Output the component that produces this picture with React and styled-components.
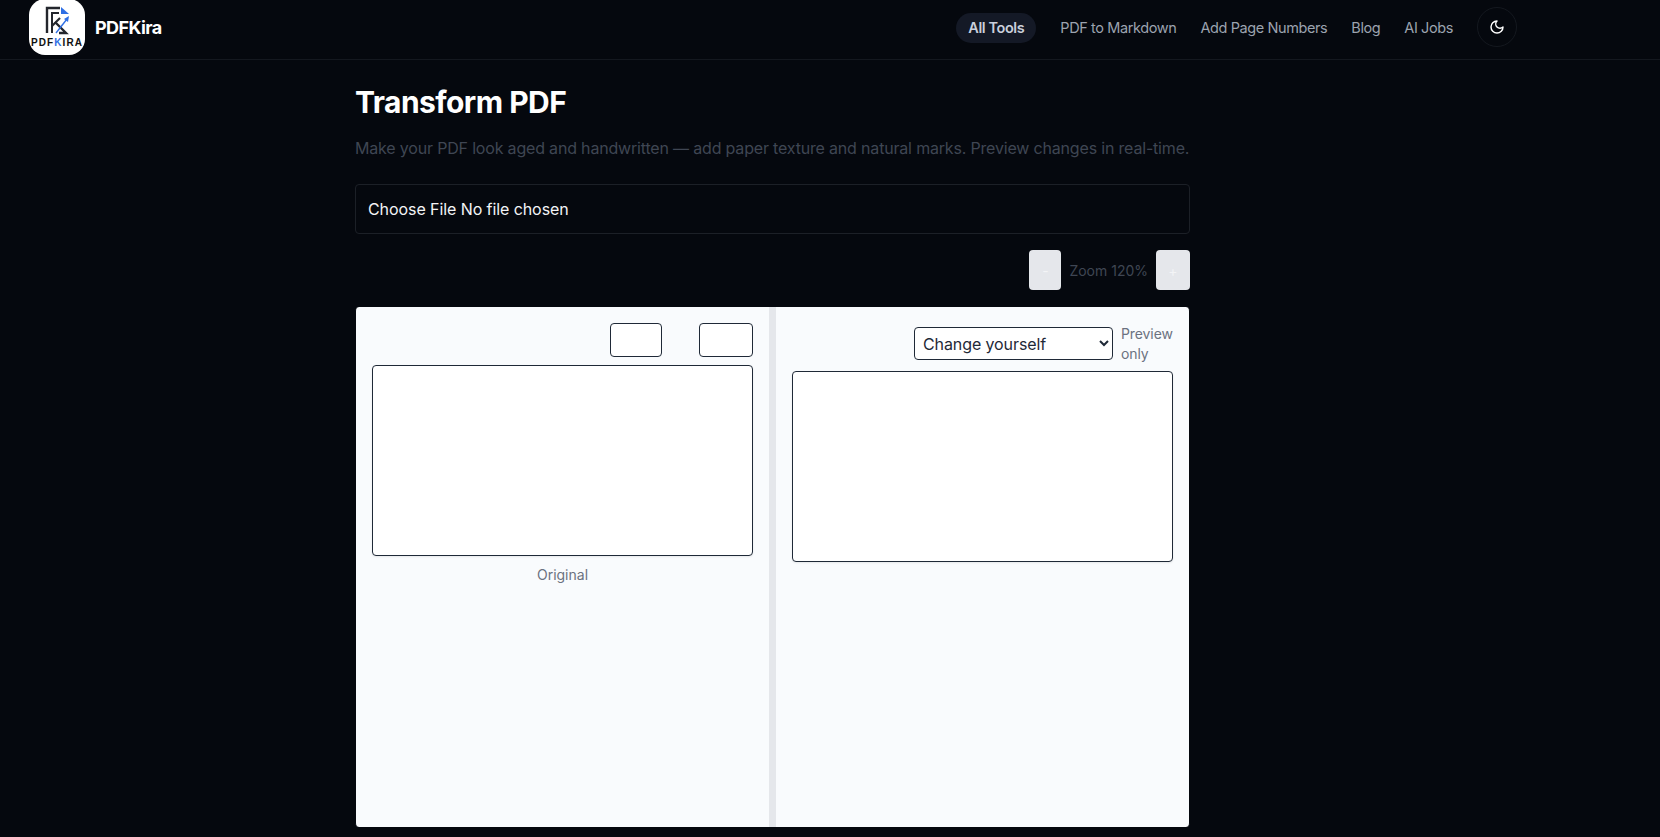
import React from 'react'
import styled, { createGlobalStyle } from 'styled-components'

const FONT = `Inter, "Liberation Sans", sans-serif`

const GlobalStyle = createGlobalStyle`
  html, body {
    margin: 0;
    padding: 0;
    height: 837px;
    overflow: hidden;
    background: #05080e;
    font-family: ${FONT};
  }
  * {
    box-sizing: border-box;
  }
`

const Header = styled.header`
  height: 60px;
  padding: 0 143px 3px 29px;
  display: flex;
  align-items: center;
  justify-content: space-between;
  border-bottom: 1px solid #14181f;
`

const Brand = styled.a`
  display: flex;
  align-items: center;
  gap: 10px;
  color: #fff;
  font-size: 18px;
  line-height: 22px;
  font-weight: 700;
  letter-spacing: -0.6px;
`

const BrandName = styled.span`
  margin-bottom: 1px;
`

const LogoBox = styled.div`
  width: 56px;
  height: 56px;
  margin-top: -2px;
  border-radius: 16px;
  background: #fff;
  overflow: hidden;
`

const Nav = styled.nav`
  display: flex;
  align-items: center;
  gap: 24px;
`

const NavLink = styled.a`
  font-size: 14.5px;
  letter-spacing: -0.4px;
  font-weight: ${p => (p.$active ? 600 : 400)};
  color: ${p => (p.$active ? '#c9cfdb' : '#9ca3af')};
  background: ${p => (p.$active ? '#141926' : 'transparent')};
  padding: ${p => (p.$active ? '6px 12px' : '6px 0')};
  border-radius: 15px;
  line-height: 18px;
`

const ThemeButton = styled.button`
  width: 40px;
  height: 40px;
  margin-bottom: 2px;
  display: flex;
  align-items: center;
  justify-content: center;
  padding: 0;
  background: transparent;
  border: 1px solid #14181f;
  border-radius: 50%;
  color: #fff;
`

const Main = styled.main`
  width: 835px;
  margin-left: 355px;
`

const Title = styled.h1`
  margin: 22px 0 0;
  font-size: 30px;
  line-height: 40px;
  font-weight: 700;
  letter-spacing: -0.55px;
  color: #fff;
`

const Subtitle = styled.p`
  margin: 14px 0 0;
  font-size: 16px;
  line-height: 24px;
  letter-spacing: -0.18px;
  color: #3f4653;
`

const FileBox = styled.div`
  height: 50px;
  margin-top: 24px;
  padding: 0 12px;
  display: flex;
  align-items: center;
  gap: 4px;
  border: 1px solid #1c2027;
  border-radius: 4px;
  color: #f3f4f6;
  font-size: 16px;
  letter-spacing: -0.08px;
`

const ZoomRow = styled.div`
  height: 40px;
  margin-top: 16px;
  display: flex;
  align-items: center;
  justify-content: flex-end;
  gap: 8px;
`

const ZoomButton = styled.button`
  width: ${p => p.$w}px;
  height: 40px;
  padding: 0;
  border: none;
  border-radius: 4px;
  background: #e5e7eb;
  color: #f3f4f6;
  font-family: inherit;
  font-size: 14px;
`

const ZoomLabel = styled.span`
  font-size: 14px;
  letter-spacing: 0;
  color: #3f4653;
`

const Viewer = styled.section`
  height: 520px;
  margin-top: 17px;
  display: grid;
  grid-template-columns: 413px 7px 1fr;
  background: #f9fbfd;
  border-left: 1px solid #05080e;
  border-right: 1px solid #05080e;
  border-radius: 4px;
  overflow: hidden;
`

const Pane = styled.div`
  padding: 16px 16px 0;
  display: flex;
  flex-direction: column;
`

const Divider = styled.div`
  background: #e5e7eb;
`

const PaneTools = styled.div`
  display: flex;
  align-items: center;
  justify-content: flex-end;
`

const BlankButton = styled.button`
  width: ${p => p.$w}px;
  height: 34px;
  margin-left: ${p => p.$gap || 0}px;
  padding: 0;
  background: #fff;
  border: 1px solid #1f2937;
  border-radius: 4px;
`

const Select = styled.select`
  width: 199px;
  height: 33px;
  padding: 1px 4px 0;
  background: #fff;
  border: 1px solid #1f2937;
  border-radius: 4px;
  color: #1f2937;
  font-family: inherit;
  font-size: 16px;
  letter-spacing: -0.1px;
`

const PreviewNote = styled.span`
  width: 52px;
  margin-left: 8px;
  padding-top: 1px;
  font-size: 14px;
  line-height: 20px;
  letter-spacing: -0.1px;
  color: #6b7280;
`

const Page = styled.div`
  height: 191px;
  margin-top: ${p => p.$gap}px;
  background: #fff;
  border: 1px solid #1f2937;
  border-radius: 4px;
  box-shadow: 0 1px 2px rgba(0, 0, 0, 0.08);
`

const Caption = styled.div`
  margin-top: 9px;
  text-align: center;
  font-size: 14px;
  line-height: 20px;
  color: #6b7280;
`

function Logo() {
  return (
    <svg width="56" height="56" viewBox="0 0 56 56">
      <path d="M18 34V9h13" fill="none" stroke="#23262d" strokeWidth="2.4" />
      <path d="M23 34V14h7" fill="none" stroke="#23262d" strokeWidth="2" />
      <path d="M23 27l8-8" fill="none" stroke="#23262d" strokeWidth="2.2" />
      <path d="M26 23l11 11h-7" fill="none" stroke="#23262d" strokeWidth="2.4" />
      <path d="M32 8l8 7h-8z" fill="#2f6fe4" />
      <path d="M27 34l11-14" fill="none" stroke="#2f6fe4" strokeWidth="1.4" />
      <path d="M40 17l-1 6-4-3z" fill="#2f6fe4" />
      <text x="28" y="46.5" textAnchor="middle" fontFamily="'Liberation Sans', sans-serif" fontSize="10" letterSpacing="1.1" fill="#111">
        PDF<tspan fill="#2f6fe4">K</tspan>IRA
      </text>
    </svg>
  )
}

function Moon() {
  return (
    <svg width="16" height="16" viewBox="0 0 24 24" fill="none" stroke="currentColor" strokeWidth="2.2" strokeLinecap="round" strokeLinejoin="round">
      <path d="M12 3a6 6 0 0 0 9 9 9 9 0 1 1-9-9Z" />
    </svg>
  )
}

export default function App() {
  return (
    <>
      <GlobalStyle />
      <Header>
        <Brand>
          <LogoBox><Logo /></LogoBox>
          <BrandName>PDFKira</BrandName>
        </Brand>
        <Nav>
          <NavLink $active>All Tools</NavLink>
          <NavLink>PDF to Markdown</NavLink>
          <NavLink>Add Page Numbers</NavLink>
          <NavLink>Blog</NavLink>
          <NavLink>AI Jobs</NavLink>
          <ThemeButton aria-label="Toggle theme"><Moon /></ThemeButton>
        </Nav>
      </Header>
      <Main>
        <Title>Transform PDF</Title>
        <Subtitle>Make your PDF look aged and handwritten — add paper texture and natural marks. Preview changes in real-time.</Subtitle>
        <FileBox>Choose File No file chosen</FileBox>
        <ZoomRow>
          <ZoomButton $w={32}>-</ZoomButton>
          <ZoomLabel>Zoom 120%</ZoomLabel>
          <ZoomButton $w={34}>+</ZoomButton>
        </ZoomRow>
        <Viewer>
          <Pane>
            <PaneTools>
              <BlankButton $w={52} />
              <BlankButton $w={54} $gap={37} />
            </PaneTools>
            <Page $gap={8} />
            <Caption>Original</Caption>
          </Pane>
          <Divider />
          <Pane>
            <PaneTools>
              <Select defaultValue="Change yourself">
                <option>Change yourself</option>
              </Select>
              <PreviewNote>Preview only</PreviewNote>
            </PaneTools>
            <Page $gap={7} />
          </Pane>
        </Viewer>
      </Main>
    </>
  )
}
